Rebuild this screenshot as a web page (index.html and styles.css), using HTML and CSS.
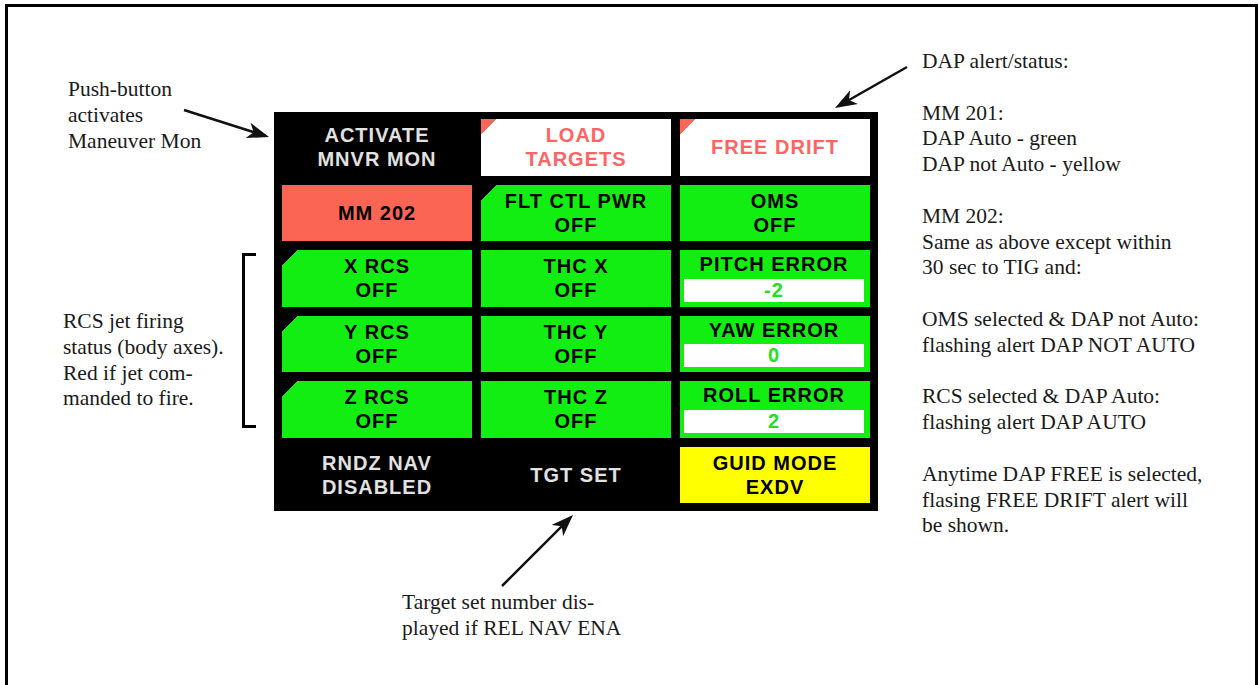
FILE: index.html
```html
<!DOCTYPE html>
<html lang="en">
<head>
    <meta charset="UTF-8">
    <meta name="viewport" content="width=device-width, initial-scale=1.0">
    <title>Maneuver Monitor Display</title>
    <link rel="stylesheet" href="styles.css">
</head>
<body>
    <div class="frame">

        <!-- Left callouts -->
        <div class="notes-left">
            <div class="note note-push">Push-button<br>activates<br>Maneuver Mon</div>
            <div class="rcs-group">
                <div class="note note-rcs">RCS jet firing<br>status (body axes).<br>Red if jet com-<br>manded to fire.</div>
                <div class="bracket"></div>
            </div>
        </div>

        <!-- Display panel -->
        <div class="center">
            <div class="panel">
                <div class="cell dark">ACTIVATE<br>MNVR MON</div>
                <div class="cell alert">LOAD<br>TARGETS</div>
                <div class="cell alert">FREE DRIFT</div>

                <div class="cell salmon">MM 202</div>
                <div class="cell cut">FLT CTL PWR<br>OFF</div>
                <div class="cell green">OMS<br>OFF</div>

                <div class="cell cut">X RCS<br>OFF</div>
                <div class="cell green">THC X<br>OFF</div>
                <div class="cell green error">
                    <div class="error-title">PITCH ERROR</div>
                    <div class="error-value">-2</div>
                </div>

                <div class="cell cut">Y RCS<br>OFF</div>
                <div class="cell green">THC Y<br>OFF</div>
                <div class="cell green error">
                    <div class="error-title">YAW ERROR</div>
                    <div class="error-value">0</div>
                </div>

                <div class="cell cut">Z RCS<br>OFF</div>
                <div class="cell green">THC Z<br>OFF</div>
                <div class="cell green error">
                    <div class="error-title">ROLL ERROR</div>
                    <div class="error-value">2</div>
                </div>

                <div class="cell dark">RNDZ NAV<br>DISABLED</div>
                <div class="cell dark">TGT SET</div>
                <div class="cell yellow">GUID MODE<br>EXDV</div>
            </div>
            <div class="note note-target">Target set number dis-<br>played if REL NAV ENA</div>
        </div>

        <!-- Right callouts -->
        <div class="note notes-right">
            DAP alert/status:<br>
            <br>
            MM 201:<br>
            DAP Auto - green<br>
            DAP not Auto - yellow<br>
            <br>
            MM 202:<br>
            Same as above except within<br>
            30 sec to TIG and:<br>
            <br>
            OMS selected &amp; DAP not Auto:<br>
            flashing alert DAP NOT AUTO<br>
            <br>
            RCS selected &amp; DAP Auto:<br>
            flashing alert DAP AUTO<br>
            <br>
            Anytime DAP FREE is selected,<br>
            flasing FREE DRIFT alert will<br>
            be shown.
        </div>

        <!-- Callout arrows drawn over the diagram -->
        <svg class="arrows" width="1247" height="678" viewBox="0 0 1247 678">
            <defs>
                <marker id="head" markerWidth="24" markerHeight="16" refX="18" refY="8" orient="auto" markerUnits="userSpaceOnUse">
                    <path d="M0,0 L22,8 L0,16 L6,8 Z" fill="#111"/>
                </marker>
            </defs>
            <line x1="176" y1="103" x2="257.2" y2="128.8" stroke="#111" stroke-width="2.5" marker-end="url(#head)"/>
            <line x1="899" y1="60" x2="830.5" y2="99" stroke="#111" stroke-width="2.5" marker-end="url(#head)"/>
            <line x1="494" y1="579" x2="562.2" y2="510.8" stroke="#111" stroke-width="2.5" marker-end="url(#head)"/>
        </svg>
    </div>
</body>
</html>
```

FILE: styles.css
```css
/* Page */
html, body {
    margin: 0;
    overflow: hidden;
    background: #fff;
}

body {
    font-family: 'Liberation Serif', 'Times New Roman', serif;
    color: #1a1a1a;
}

/* Figure frame (open at the bottom) */
.frame {
    position: relative;
    display: flex;
    width: 1247px;
    height: 678px;
    margin: 4px 0 0 5px;
    border: 3px solid #000;
    border-bottom: none;
}

.note {
    font-size: 21.5px;
    line-height: 25.8px;
    white-space: nowrap;
}

/* Left column */
.notes-left {
    width: 266px;
    display: flex;
    flex-direction: column;
}

.note-push {
    margin: 70px 0 0 60px;
}

.rcs-group {
    display: flex;
    justify-content: space-between;
    align-items: flex-start;
    margin-top: 98.6px;
    padding-right: 18px;
}

.note-rcs {
    margin: 56px 0 0 55px;
}

.bracket {
    width: 11px;
    height: 169px;
    border: 3px solid #000;
    border-right: none;
}

/* Center column */
.center {
    width: 604px;
    display: flex;
    flex-direction: column;
}

.panel {
    margin-top: 105px;
    background: #000;
    padding: 7px 8px 8px;
    display: grid;
    grid-template-columns: repeat(3, 190px);
    grid-template-rows: repeat(6, 56.5px);
    gap: 9px;
}

.note-target {
    margin: 79px 0 0 128px;
}

/* Right column */
.notes-right {
    margin-left: 44px;
    padding-top: 42px;
}

/* Panel cells */
.cell {
    display: flex;
    flex-direction: column;
    justify-content: center;
    align-items: center;
    text-align: center;
    font-family: 'Liberation Sans', Arial, sans-serif;
    font-weight: bold;
    font-size: 20px;
    line-height: 24px;
    letter-spacing: 1px;
    color: #000;
}

.dark {
    color: #e2e2e2;
}

.alert {
    background: linear-gradient(135deg, #ff6656 11px, #fff 11px);
    color: #ff6464;
}

.green {
    background: #12ee12;
}

.cut {
    background: linear-gradient(135deg, #000 11px, #12ee12 11px);
}

.salmon {
    background: #fb6654;
}

.yellow {
    background: #ffff00;
}

/* Error readouts with a white value box */
.error {
    justify-content: space-between;
    padding: 4px 6px 5px 4px;
}

.error-title {
    line-height: 20px;
}

.error-value {
    align-self: stretch;
    background: #fff;
    color: #22e022;
    line-height: 23px;
}

/* Arrows */
.arrows {
    position: absolute;
    left: 0;
    top: 0;
    pointer-events: none;
}
```
